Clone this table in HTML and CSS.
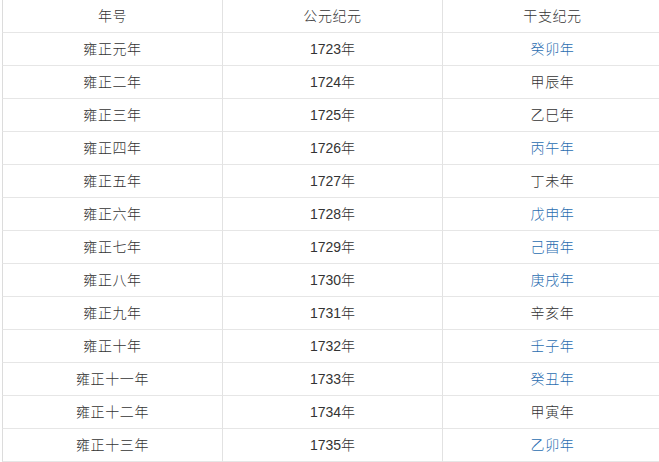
FILE: index.html
```html
<!DOCTYPE html>
<html lang="zh">
<head>
<meta charset="utf-8">
<link rel="stylesheet" href="styles.css">
</head>
<body>
<table class="era">
  <thead>
    <tr><th>年号</th><th>公元纪元</th><th>干支纪元</th></tr>
  </thead>
  <tbody>
    <tr><td>雍正元年</td><td class="num">1723年</td><td><span class="link">癸卯年</span></td></tr>
    <tr><td>雍正二年</td><td class="num">1724年</td><td>甲辰年</td></tr>
    <tr><td>雍正三年</td><td class="num">1725年</td><td>乙巳年</td></tr>
    <tr><td>雍正四年</td><td class="num">1726年</td><td><span class="link">丙午年</span></td></tr>
    <tr><td>雍正五年</td><td class="num">1727年</td><td>丁未年</td></tr>
    <tr><td>雍正六年</td><td class="num">1728年</td><td><span class="link">戊申年</span></td></tr>
    <tr><td>雍正七年</td><td class="num">1729年</td><td><span class="link">己酉年</span></td></tr>
    <tr><td>雍正八年</td><td class="num">1730年</td><td><span class="link">庚戌年</span></td></tr>
    <tr><td>雍正九年</td><td class="num">1731年</td><td>辛亥年</td></tr>
    <tr><td>雍正十年</td><td class="num">1732年</td><td><span class="link">壬子年</span></td></tr>
    <tr><td>雍正十一年</td><td class="num">1733年</td><td><span class="link">癸丑年</span></td></tr>
    <tr><td>雍正十二年</td><td class="num">1734年</td><td>甲寅年</td></tr>
    <tr><td>雍正十三年</td><td class="num">1735年</td><td><span class="link">乙卯年</span></td></tr>
  </tbody>
</table>
</body>
</html>
```

FILE: styles.css
```css
html, body {
  margin: 0;
  padding: 0;
  background: #fff;
  overflow: hidden;
}
body {
  width: 659px;
  height: 462px;
  font-family: "Liberation Sans", "Noto Sans CJK SC", sans-serif;
  font-size: 14px;
  font-weight: 300;
  color: #333;
}
.era {
  margin-left: 2px;
  border-collapse: separate;
  border-spacing: 0;
  table-layout: fixed;
  width: 657px;
}
.era th,
.era td {
  width: 219px;
  height: 32px;
  padding: 0;
  box-sizing: content-box;
  text-align: center;
  vertical-align: middle;
  font-weight: 300;
  letter-spacing: 0.6px;
  border-left: 1px solid #e2e2e2;
  border-bottom: 1px solid #e6e6e6;
  line-height: 20px;
}
.era td.num {
  letter-spacing: 0;
}
.era th:first-child,
.era td:first-child {
  border-left-color: #dcdcdc;
}
.link {
  color: #2a6db0;
}
```
